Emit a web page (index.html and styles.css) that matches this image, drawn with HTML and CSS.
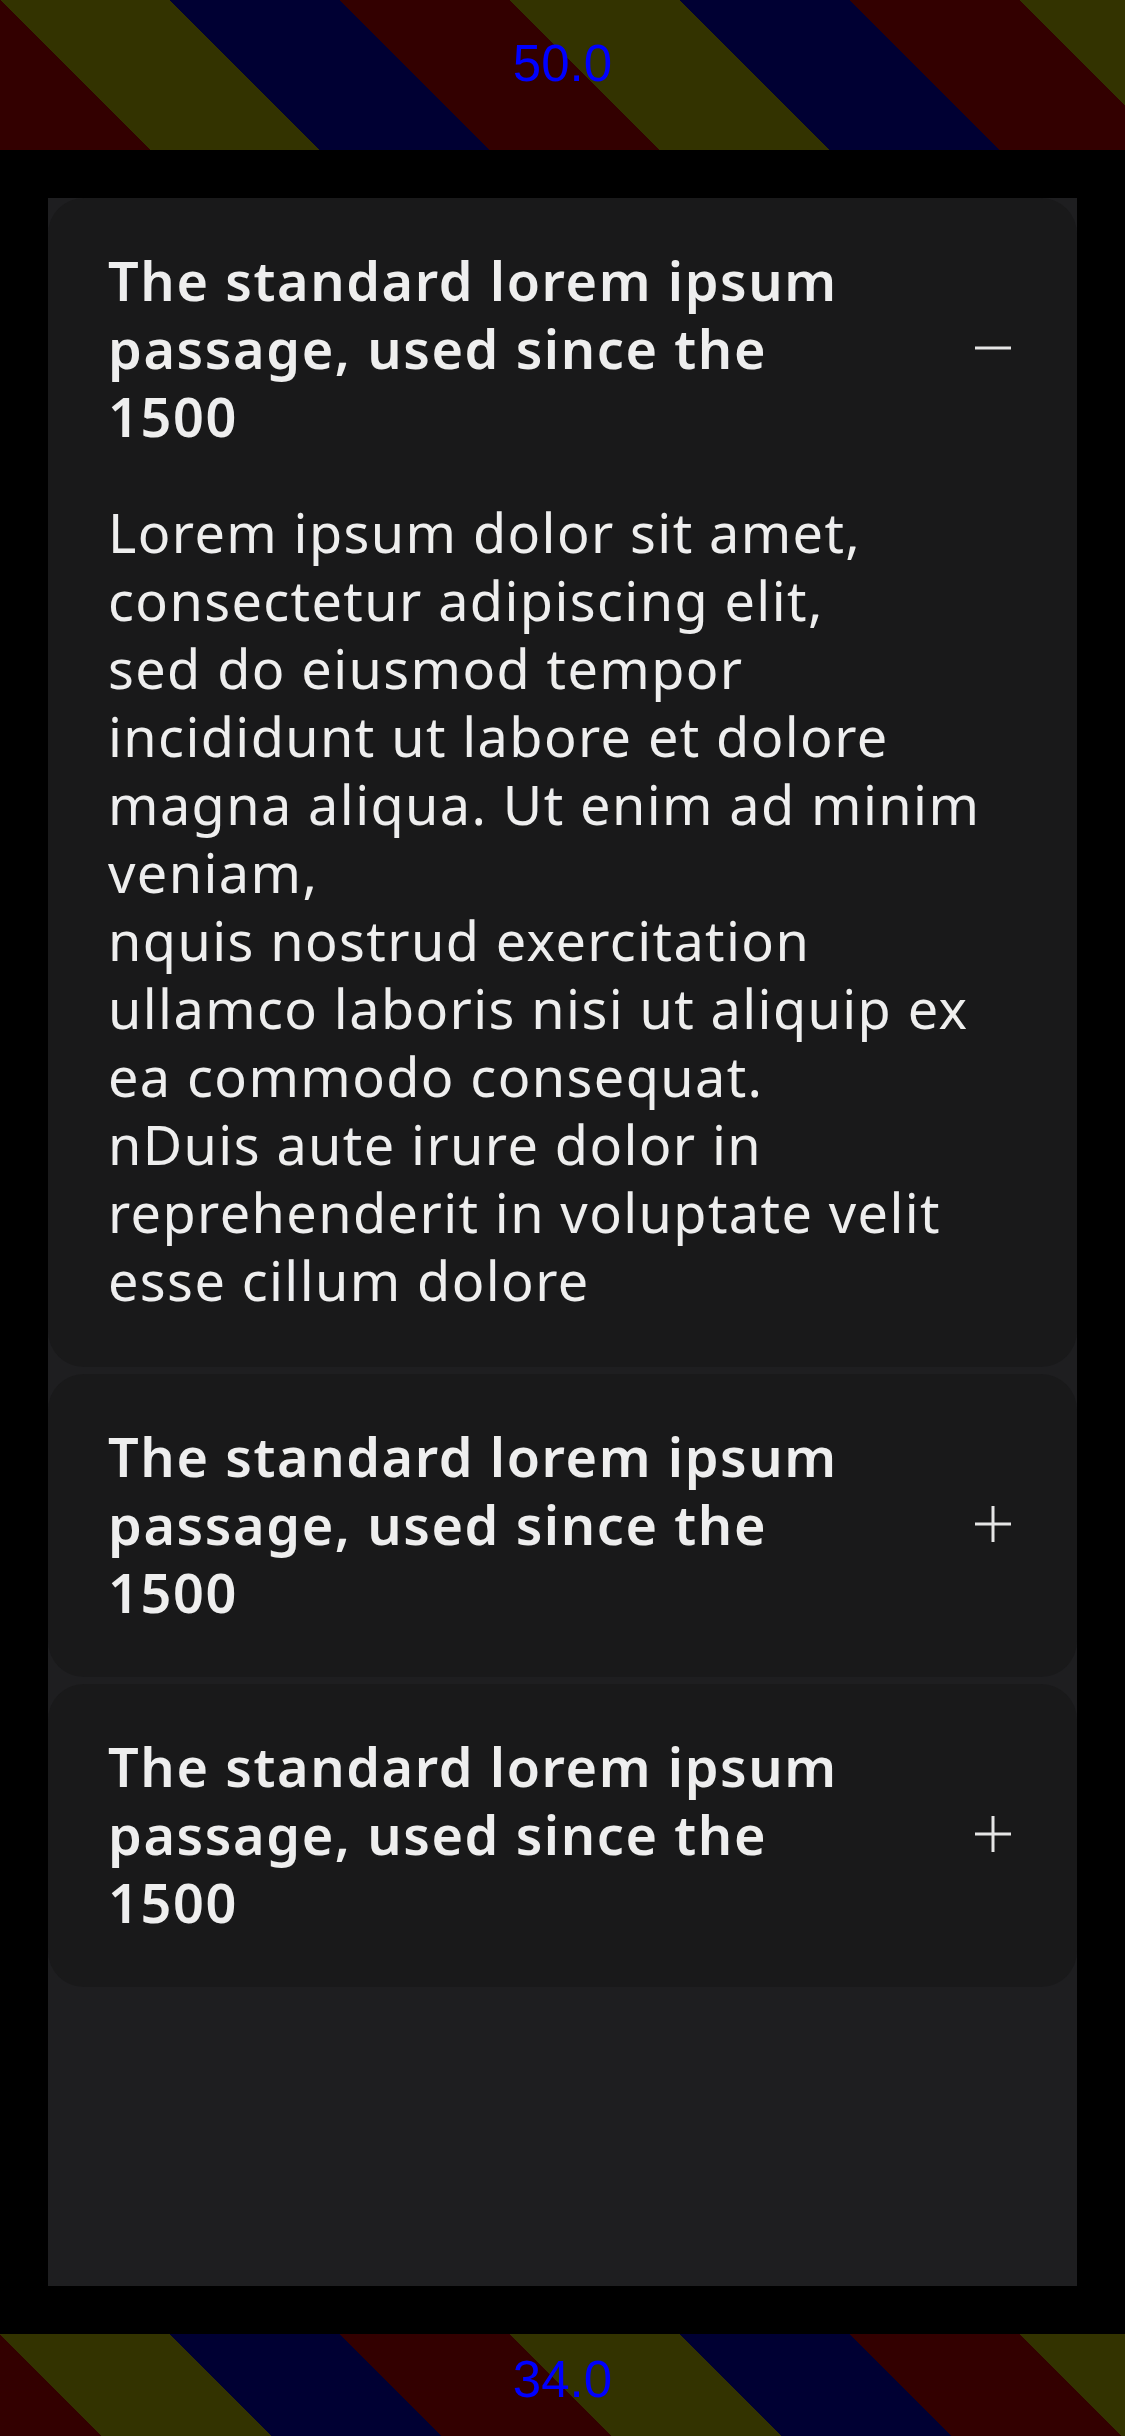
FILE: index.html
```html
<!DOCTYPE html>
<html lang="en">
<head>
<meta charset="utf-8">
<title>Accordion</title>
<link rel="stylesheet" href="styles.css">
</head>
<body>
<div class="screen">
  <div class="safe safe-top"><span class="safe-label">50.0</span></div>
  <main class="content">
    <div class="panel">
      <section class="item open">
        <div class="item-header">
          <h2 class="item-title">The standard lorem ipsum passage, used since the 1500</h2>
          <span class="item-icon">
            <svg width="36" height="36" viewBox="0 0 36 36"><line x1="0" y1="18" x2="36" y2="18" /></svg>
          </span>
        </div>
        <p class="item-body">Lorem ipsum dolor sit amet, consectetur adipiscing elit,<br>sed do eiusmod tempor incididunt ut labore et dolore magna aliqua. Ut enim ad minim veniam,<br>nquis nostrud exercitation ullamco laboris nisi ut aliquip ex ea commodo consequat.<br>nDuis aute irure dolor in reprehenderit in voluptate velit esse cillum dolore</p>
      </section>
      <section class="item">
        <div class="item-header">
          <h2 class="item-title">The standard lorem ipsum passage, used since the 1500</h2>
          <span class="item-icon">
            <svg width="36" height="36" viewBox="0 0 36 36"><line x1="0" y1="18" x2="36" y2="18" /><line x1="18" y1="0" x2="18" y2="36" /></svg>
          </span>
        </div>
      </section>
      <section class="item">
        <div class="item-header">
          <h2 class="item-title">The standard lorem ipsum passage, used since the 1500</h2>
          <span class="item-icon">
            <svg width="36" height="36" viewBox="0 0 36 36"><line x1="0" y1="18" x2="36" y2="18" /><line x1="18" y1="0" x2="18" y2="36" /></svg>
          </span>
        </div>
      </section>
    </div>
  </main>
  <div class="safe safe-bottom"><span class="safe-label">34.0</span></div>
</div>
</body>
</html>
```
FILE: styles.css
```css
html, body {
  margin: 0;
  padding: 0;
  background: #000;
}

.screen {
  width: 1125px;
  height: 2436px;
  display: flex;
  flex-direction: column;
  background: #000;
}

.safe {
  text-align: center;
  font-family: "Liberation Sans", Arial, sans-serif;
  font-size: 51px;
  line-height: normal;
  color: #0000ff;
  box-sizing: border-box;
  flex: none;
}

.safe-top {
  height: 150px;
  padding-top: 34px;
  background: repeating-linear-gradient(45deg,
    #330000 0px, #330000 106.07px,
    #333300 106.07px, #333300 226.27px,
    #000033 226.27px, #000033 346.48px,
    #330000 346.48px, #330000 360.62px);
}

.safe-bottom {
  height: 102px;
  padding-top: 16px;
  background: repeating-linear-gradient(45deg,
    #330000 0px, #330000 72.12px,
    #333300 72.12px, #333300 192.33px,
    #000033 192.33px, #000033 312.54px,
    #330000 312.54px, #330000 360.62px);
}

.content {
  flex: 1;
  padding: 48px;
  display: flex;
  box-sizing: border-box;
}

.panel {
  flex: 1;
  background: #1e1e20;
  display: flex;
  flex-direction: column;
  gap: 7px;
}

.item {
  background: #19191a;
  border-radius: 36px;
  padding: 48px 60px 51px 60px;
  color: #eeeeee;
  font-family: "Noto Sans", "DejaVu Sans", sans-serif;
  font-size: 54px;
  line-height: 68px;
  letter-spacing: 1.4px;
}

.item.open {
  padding-bottom: 53px;
}

.item-header {
  display: flex;
  align-items: center;
  gap: 96px;
}

.item-title {
  flex: 1;
  margin: 0;
  font-size: 54px;
  font-weight: 600;
  line-height: 68px;
  letter-spacing: 1.6px;
}

.item-icon {
  flex: none;
  width: 48px;
  display: flex;
  justify-content: center;
  align-items: center;
}

.item-icon svg {
  display: block;
  stroke: #e6e6e6;
  stroke-width: 3;
}

.item-body {
  margin: 48px 0 0 0;
  font-weight: 400;
}
```
